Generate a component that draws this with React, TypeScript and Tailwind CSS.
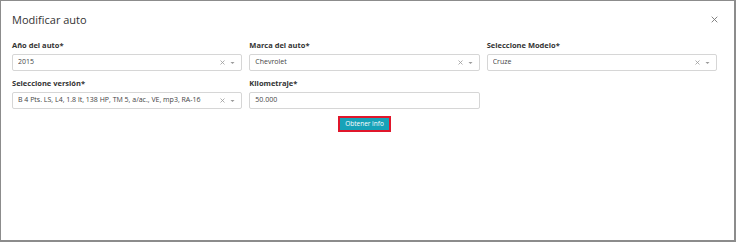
const fields = [
  { label: 'Año del auto*', value: '2015', select: true },
  { label: 'Marca del auto*', value: 'Chevrolet', select: true },
  { label: 'Seleccione Modelo*', value: 'Cruze', select: true },
  { label: 'Seleccione versión*', value: 'B 4 Pts. LS, L4, 1.8 lt, 138 HP, TM 5, a/ac., VE, mp3, RA-16', select: true },
  { label: 'Kilometraje*', value: '50.000', select: false },
]

function Field({ label, value, select }: { label: string; value: string; select: boolean }) {
  return (
    <div className="flex flex-col">
      <label className="text-[7.5px] font-bold leading-[10px] text-[#333] mb-[4px]">{label}</label>
      <div className="h-[17px] flex items-center border border-[#d6d6d6] rounded-[2px] bg-white pl-[5px] pr-[6px]">
        <span className="flex-1 text-[7px] text-[#444] truncate">{value}</span>
        {select && (
          <div className="flex items-center gap-[5px] text-[#9a9a9a]">
            <svg width="5" height="5" viewBox="0 0 10 10" stroke="currentColor" strokeWidth="1.6">
              <path d="M1 1l8 8M9 1l-8 8" />
            </svg>
            <svg width="5" height="4" viewBox="0 0 10 8" fill="currentColor">
              <path d="M1 2h8L5 6z" />
            </svg>
          </div>
        )}
      </div>
    </div>
  )
}

export default function App() {
  return (
    <div
      className="w-[736px] h-[242px] bg-white border border-[#8c8c8c] border-r-2 border-b-2 overflow-hidden"
      style={{ fontFamily: '"Open Sans", "Noto Sans", sans-serif' }}
    >
      <div className="flex items-center justify-between pl-[11px] pr-[16px] pt-[11px]">
        <h1 className="text-[11px] leading-[15px] text-[#333]">Modificar auto</h1>
        <svg width="7" height="7" viewBox="0 0 10 10" stroke="#777" strokeWidth="1.3">
          <path d="M1 1l8 8M9 1l-8 8" />
        </svg>
      </div>

      <div className="pl-[11px] pr-[17px] pt-[13px]">
        <div className="grid grid-cols-3 gap-x-[7px] gap-y-[7px]">
          {fields.map((f) => (
            <Field key={f.label} {...f} />
          ))}
        </div>
        <div className="flex justify-center mt-[7px]">
          <button className="h-[16px] px-[5px] bg-[#17a2b8] border-2 border-[#e0162b] text-white text-[6.5px] leading-none">
            Obtener info
          </button>
        </div>
      </div>
    </div>
  )
}
